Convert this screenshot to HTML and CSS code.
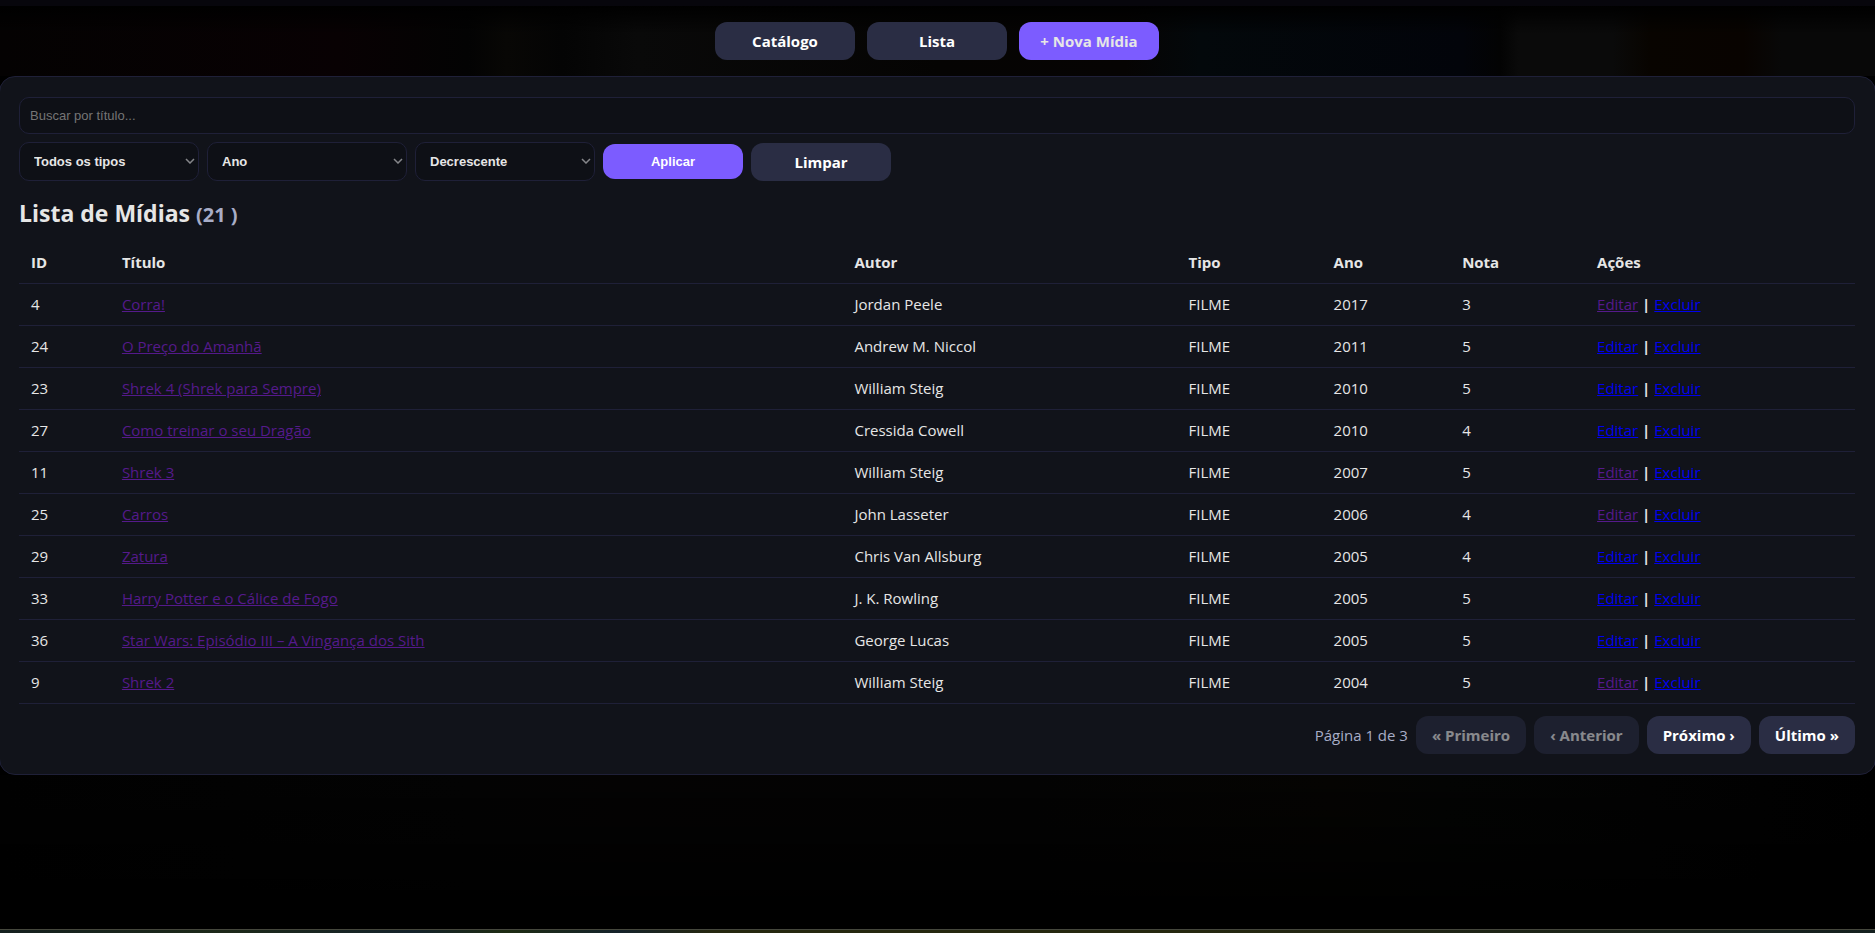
FILE: index.html
```html
<!DOCTYPE html>
<html lang="pt-BR">
<head>
<meta charset="utf-8">
<meta name="viewport" content="width=device-width, initial-scale=1">
<title>Lista de Mídias</title>
<link rel="stylesheet" href="styles.css">
</head>
<body>
<div class="topbar"></div>
<nav class="nav" aria-label="Principal">
  <a class="btn btn-fixed" href="#catalogo">Catálogo</a>
  <a class="btn btn-fixed" href="#lista">Lista</a>
  <a class="btn btn-fixed btn-primary" href="#nova">+ Nova Mídia</a>
</nav>
<main class="card">
  <form class="filters">
    <input class="search" type="text" placeholder="Buscar por título..." aria-label="Buscar por título">
    <div class="filter-row">
      <span class="select"><select aria-label="Tipo"><option>Todos os tipos</option></select><svg viewBox="0 0 10 6" aria-hidden="true"><path d="M1 1l4 4 4-4"/></svg></span>
      <span class="select select-wide"><select aria-label="Ordenar por"><option>Ano</option></select><svg viewBox="0 0 10 6" aria-hidden="true"><path d="M1 1l4 4 4-4"/></svg></span>
      <span class="select"><select aria-label="Direção"><option>Decrescente</option></select><svg viewBox="0 0 10 6" aria-hidden="true"><path d="M1 1l4 4 4-4"/></svg></span>
      <button class="btn btn-fixed btn-apply" type="submit">Aplicar</button>
      <a class="btn btn-fixed" href="#limpar">Limpar</a>
    </div>
  </form>
  <h1 class="title">Lista de Mídias <small>(21 )</small></h1>
  <table class="table">
    <colgroup><col class="c-id"><col class="c-title"><col class="c-author"><col class="c-type"><col class="c-year"><col class="c-score"><col></colgroup>
    <thead><tr><th>ID</th><th>Título</th><th>Autor</th><th>Tipo</th><th>Ano</th><th>Nota</th><th>Ações</th></tr></thead>
    <tbody>
      <tr><td>4</td><td><a class="seen" href="#m4">Corra!</a></td><td>Jordan Peele</td><td>FILME</td><td>2017</td><td>3</td><td><a class="seen" href="#e4">Editar</a> <b>|</b> <a href="#x4">Excluir</a></td></tr>
      <tr><td>24</td><td><a class="seen" href="#m24">O Preço do Amanhã</a></td><td>Andrew M. Niccol</td><td>FILME</td><td>2011</td><td>5</td><td><a href="#e24">Editar</a> <b>|</b> <a href="#x24">Excluir</a></td></tr>
      <tr><td>23</td><td><a class="seen" href="#m23">Shrek 4 (Shrek para Sempre)</a></td><td>William Steig</td><td>FILME</td><td>2010</td><td>5</td><td><a href="#e23">Editar</a> <b>|</b> <a href="#x23">Excluir</a></td></tr>
      <tr><td>27</td><td><a class="seen" href="#m27">Como treinar o seu Dragão</a></td><td>Cressida Cowell</td><td>FILME</td><td>2010</td><td>4</td><td><a href="#e27">Editar</a> <b>|</b> <a href="#x27">Excluir</a></td></tr>
      <tr><td>11</td><td><a class="seen" href="#m11">Shrek 3</a></td><td>William Steig</td><td>FILME</td><td>2007</td><td>5</td><td><a class="seen" href="#e11">Editar</a> <b>|</b> <a href="#x11">Excluir</a></td></tr>
      <tr><td>25</td><td><a class="seen" href="#m25">Carros</a></td><td>John Lasseter</td><td>FILME</td><td>2006</td><td>4</td><td><a class="seen" href="#e25">Editar</a> <b>|</b> <a href="#x25">Excluir</a></td></tr>
      <tr><td>29</td><td><a class="seen" href="#m29">Zatura</a></td><td>Chris Van Allsburg</td><td>FILME</td><td>2005</td><td>4</td><td><a href="#e29">Editar</a> <b>|</b> <a href="#x29">Excluir</a></td></tr>
      <tr><td>33</td><td><a class="seen" href="#m33">Harry Potter e o Cálice de Fogo</a></td><td>J. K. Rowling</td><td>FILME</td><td>2005</td><td>5</td><td><a href="#e33">Editar</a> <b>|</b> <a href="#x33">Excluir</a></td></tr>
      <tr><td>36</td><td><a class="seen" href="#m36">Star Wars: Episódio III – A Vingança dos Sith</a></td><td>George Lucas</td><td>FILME</td><td>2005</td><td>5</td><td><a href="#e36">Editar</a> <b>|</b> <a href="#x36">Excluir</a></td></tr>
      <tr><td>9</td><td><a class="seen" href="#m9">Shrek 2</a></td><td>William Steig</td><td>FILME</td><td>2004</td><td>5</td><td><a class="seen" href="#e9">Editar</a> <b>|</b> <a href="#x9">Excluir</a></td></tr>
    </tbody>
  </table>
  <div class="pager">
    <span class="pager-label">Página 1 de 3</span>
    <button class="btn" type="button" disabled>« Primeiro</button>
    <button class="btn" type="button" disabled>‹ Anterior</button>
    <button class="btn" type="button">Próximo ›</button>
    <button class="btn" type="button">Último »</button>
  </div>
</main>
<div class="backdrop"></div>
<div class="bottom-strip"></div>
</body>
</html>
```
FILE: styles.css
```css
* { box-sizing: border-box; }

body {
  margin: 0;
  min-height: 100vh;
  display: flex;
  flex-direction: column;
  overflow-x: hidden;
  background: #000;
  color: #e6e6e6;
  font: 15px/20px "Segoe UI", "Open Sans", "Noto Sans", sans-serif;
}

.topbar { height: 6px; background: #07060c; }

.nav {
  display: flex;
  justify-content: center;
  gap: 12px;
  padding: 16px 17px 16px 16px;
  background:
    linear-gradient(#000, transparent 40%),
    linear-gradient(90deg, #040202, #080103 18%, #030303 25%, #080705 27%, #040404 30%, #090909 34%, #050403 50%, #060403 60%, #03080b 64%, #02040a 78%, #030303 80%, #0a0a0a 81%, #0a0a0a 86%, #080400 88%, #080300 93%, #080808 95%);
}

.btn {
  display: inline-block;
  padding: 9px 16px;
  border: 0;
  border-radius: 12px;
  background: #2a2d44;
  color: #fff;
  font: 700 15px/20px "Segoe UI", "Open Sans", "Noto Sans", sans-serif;
  text-align: center;
  text-decoration: none;
  white-space: nowrap;
}
.btn:disabled { opacity: .5; }
.btn-fixed { width: 140px; }
.btn-primary { background: #7c5cff; color: #e6e6e6; }
.btn-apply {
  background: #7c5cff;
  font: bold 13px/15px "Liberation Sans", Arial, sans-serif;
  padding: 10px 16px;
}

.card {
  margin: 0 -1px;
  padding: 20px 20px 20px 19px;
  border: 1px solid #1f2038;
  border-radius: 16px;
  background: #11131a;
}

.filters { display: flex; flex-direction: column; gap: 8px; }

.search {
  width: 100%;
  height: 37px;
  padding: 0 10px;
  border: 1px solid #1f2038;
  border-radius: 10px;
  background: #0e1016;
  color: #e6e6e6;
  font: 13px/15px "Liberation Sans", Arial, sans-serif;
}
.search::placeholder { color: #757575; opacity: 1; }

.filter-row { display: flex; align-items: center; gap: 8px; }

.select { position: relative; width: 180px; }
.select-wide { width: 200px; }
.select select {
  display: block;
  appearance: none;
  width: 100%;
  height: 39px;
  padding: 0 14px;
  border: 1px solid #1f2038;
  border-radius: 10px;
  background: #0e1016;
  color: #e6e6e6;
  font: bold 13px/15px "Liberation Sans", Arial, sans-serif;
}
.select svg {
  position: absolute;
  right: 4px;
  top: 16px;
  width: 10px;
  height: 6px;
  fill: none;
  stroke: #85868a;
  stroke-width: 1.5;
  pointer-events: none;
}

.title { margin: 16px 0 10px; font-size: 23px; line-height: 32px; font-weight: 700; }
.title small { color: #a8adc7; font-size: 20px; }

.table { width: 100%; border-collapse: collapse; table-layout: fixed; }
.c-id { width: 4.95%; }
.c-title { width: 39.9%; }
.c-author { width: 18.2%; }
.c-type { width: 7.9%; }
.c-year { width: 7%; }
.c-score { width: 7.35%; }
.table th, .table td {
  height: 42px;
  padding: 0 12px;
  border-bottom: 1px solid #1f2038;
  text-align: left;
}
.table a { color: #0000ee; }
.table a.seen { color: #551a8b; }

.pager {
  display: flex;
  justify-content: flex-end;
  align-items: center;
  gap: 8px;
  margin-top: 12px;
}
.pager-label { color: #a8adc7; }

.backdrop {
  flex: 1;
  background:
    linear-gradient(transparent, #000 90%),
    linear-gradient(90deg, #010101, #030303 25%, #040303 33%, #030303 55%, #050402 71%, #030403 77%, #020202 88%, #000);
}

.bottom-strip {
  height: 4px;
  border-top: 1px solid #45473c;
  background: linear-gradient(90deg, #14201f, #1c2818 12%, #14222a 22%, #1d2b12 27%, #14222a 33%, #25270f 38%, #25270f 64%, #14201f);
}
```
